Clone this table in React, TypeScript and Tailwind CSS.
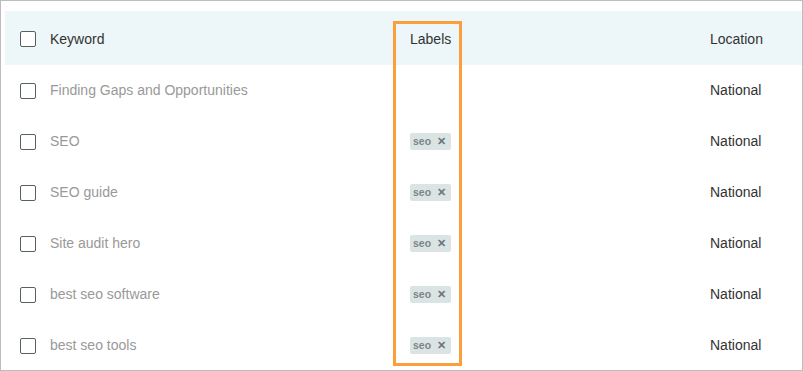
import React from 'react'

const rows = [
  { keyword: 'Finding Gaps and Opportunities', labels: [] as string[], location: 'National' },
  { keyword: 'SEO', labels: ['seo'], location: 'National' },
  { keyword: 'SEO guide', labels: ['seo'], location: 'National' },
  { keyword: 'Site audit hero', labels: ['seo'], location: 'National' },
  { keyword: 'best seo software', labels: ['seo'], location: 'National' },
  { keyword: 'best seo tools', labels: ['seo'], location: 'National' },
]

function Checkbox() {
  return <span className="block w-4 h-4 rounded-[2px] border border-[#55625f] bg-white shrink-0" />
}

function Badge({ text }: { text: string }) {
  return (
    <span className="inline-flex items-center h-[17px] pl-[3px] pr-[5px] gap-[6px] rounded-[2px] bg-[#dbe4e4] text-[10.5px] font-bold text-[#7b8585] leading-none">
      {text}
      <span className="text-[11px] text-[#6d7777]">✕</span>
    </span>
  )
}

export default function App() {
  return (
    <div
      className="relative w-[803px] h-[371px] overflow-hidden bg-white border border-[#bdbdbd] pt-[10px] pl-[4px]"
      style={{ fontFamily: '"Liberation Sans", Arial, sans-serif' }}
    >
      <div className="w-full">
        {/* Header */}
        <div className="grid grid-cols-[405px_300px_1fr] items-center h-[54px] pt-[2px] bg-[#edf6f8] text-[14px] text-[#333]">
          <div className="flex items-center gap-[14px] pl-[15px]">
            <Checkbox />
            <span>Keyword</span>
          </div>
          <div>Labels</div>
          <div>Location</div>
        </div>

        {/* Rows */}
        {rows.map((row, idx) => (
          <div
            key={idx}
            className="grid grid-cols-[405px_300px_1fr] items-center h-[51px] text-[14px]"
          >
            <div className="flex items-center gap-[14px] pl-[15px]">
              <Checkbox />
              <span className="text-[#999]">{row.keyword}</span>
            </div>
            <div className="flex gap-1">
              {row.labels.map((l) => (
                <Badge key={l} text={l} />
              ))}
            </div>
            <div className="text-[#333]">{row.location}</div>
          </div>
        ))}
      </div>

      {/* Highlight annotation */}
      <div className="absolute left-[392px] top-[20px] w-[69px] h-[345px] border-[3px] border-[#fa9f3c] pointer-events-none" />
    </div>
  )
}
